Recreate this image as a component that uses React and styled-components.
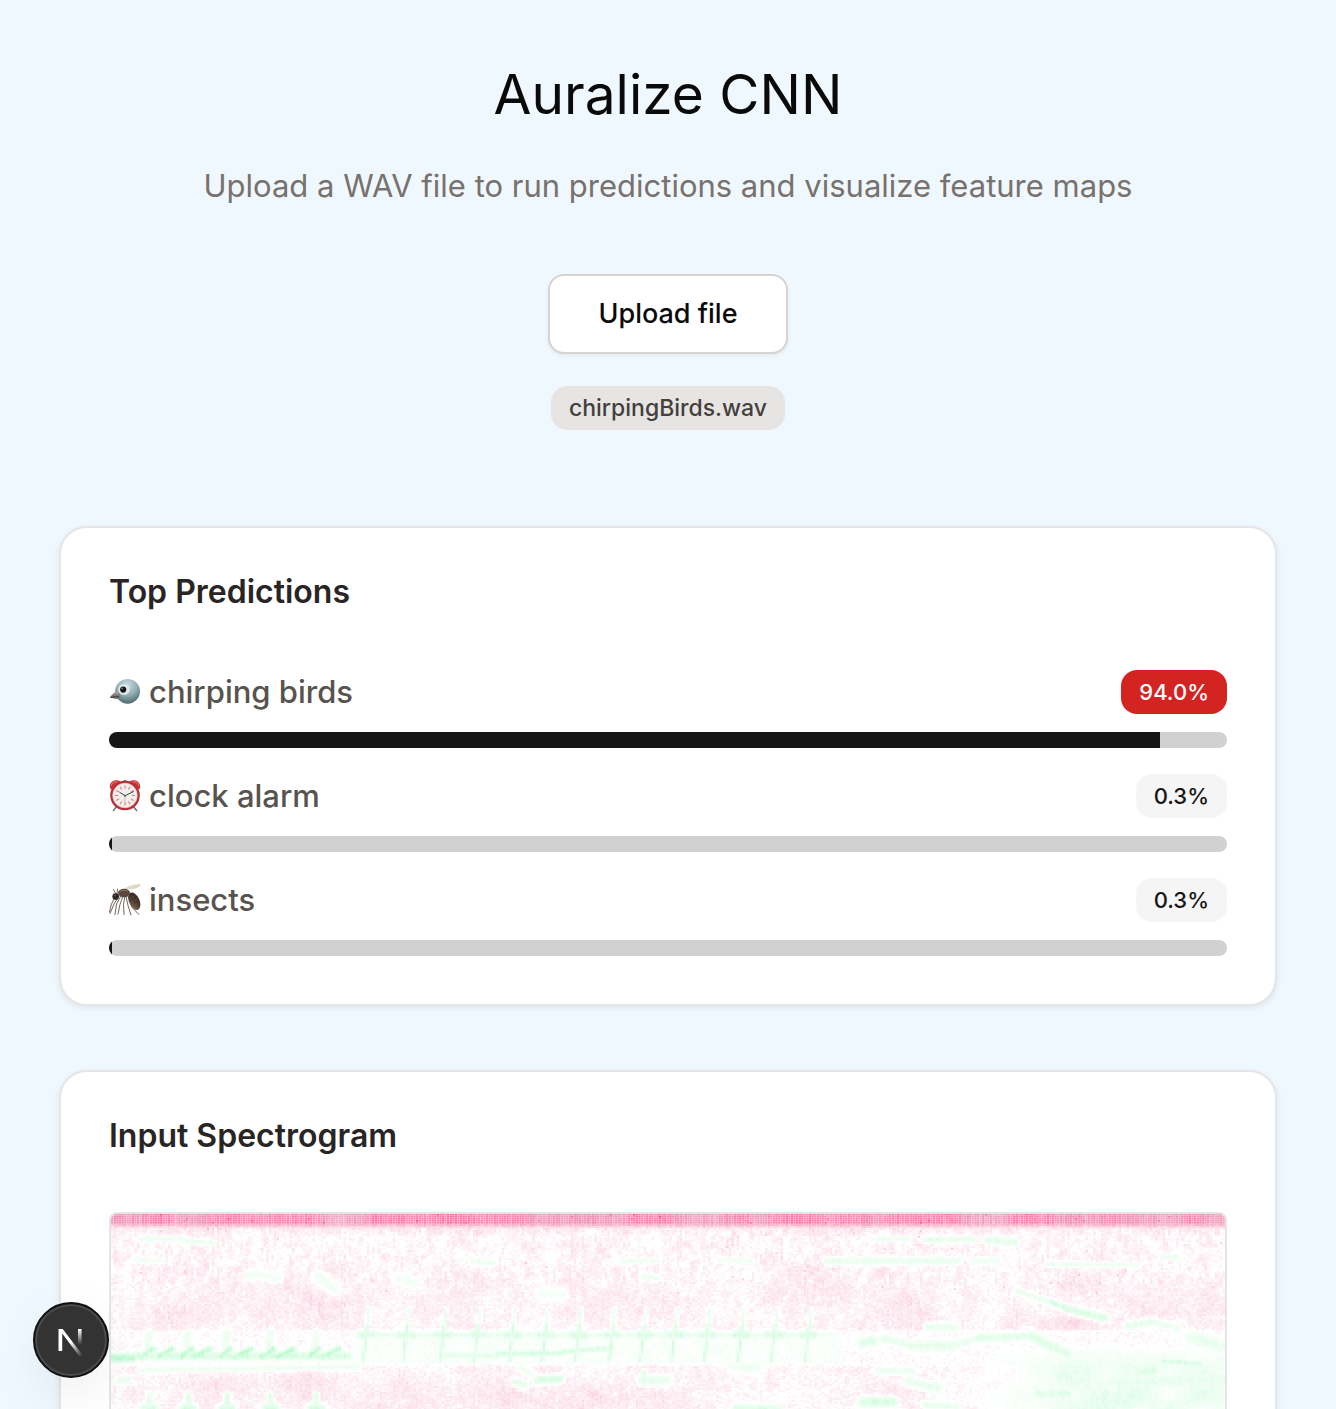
import React, { useMemo } from "react";
import styled, { createGlobalStyle } from "styled-components";

const GlobalStyle = createGlobalStyle`
  *, *::before, *::after { box-sizing: border-box; }
  body {
    margin: 0;
    background: #f0f8ff;
    font-family: Inter, "Liberation Sans", sans-serif;
    -webkit-font-smoothing: antialiased;
  }
`;

const Page = styled.main`
  height: 100vh;
  overflow-y: auto;
  scrollbar-width: none;
  padding: 64px 59px;
  background: #f0f8ff;
`;

const Header = styled.header`
  display: flex;
  flex-direction: column;
  align-items: center;
  margin-bottom: 96px;
  text-align: center;
`;

const Title = styled.h1`
  margin: 0 0 36px;
  font-size: 55px;
  line-height: 60px;
  font-weight: 400;
  color: #0a0a0a;
`;

const Subtitle = styled.p`
  margin: 0 0 62px;
  font-size: 31px;
  line-height: 52px;
  color: #78716c;
`;

const UploadButton = styled.button`
  height: 80px;
  padding: 0 48px;
  border: 2px solid #d6d3d1;
  border-radius: 16px;
  background: #fff;
  box-shadow: 0 2px 4px rgba(0, 0, 0, 0.05);
  font: 500 27px/40px Inter, "Liberation Sans", sans-serif;
  color: #0a0a0a;
  cursor: pointer;
`;

const tones = {
  file: ["#e7e5e4", "#44403c"],
  high: ["#d42422", "#ffffff"],
  low: ["#f5f5f5", "#171717"],
};

const Badge = styled.span`
  display: inline-flex;
  align-items: center;
  height: 44px;
  padding: 0 18px;
  border-radius: 16px;
  font-size: 22px;
  line-height: 32px;
  font-weight: 500;
  background: ${({ $tone }) => tones[$tone][0]};
  color: ${({ $tone }) => tones[$tone][1]};
`;

const FileBadge = styled(Badge)`
  margin-top: 32px;
  font-size: 23px;
`;

const Stack = styled.div`
  display: flex;
  flex-direction: column;
  gap: 64px;
`;

const Card = styled.section`
  padding: 48px;
  border: 2px solid #e5e5e5;
  border-radius: 28px;
  background: #fff;
  box-shadow: 0 2px 6px rgba(0, 0, 0, 0.08);
`;

const CardTitle = styled.h2`
  margin: 0 0 60px;
  font-size: 32px;
  line-height: 32px;
  font-weight: 600;
  color: #292524;
`;

const List = styled.div`
  display: flex;
  flex-direction: column;
  gap: 24px;
`;

const Row = styled.div`
  display: flex;
  flex-direction: column;
  gap: 16px;
`;

const RowHead = styled.div`
  display: flex;
  align-items: center;
  justify-content: space-between;
  height: 48px;
`;

const Label = styled.span`
  display: flex;
  align-items: center;
  gap: 8px;
  font-size: 31px;
  line-height: 48px;
  font-weight: 500;
  color: #57534e;
`;

const Glyph = styled.svg`
  flex: none;
  width: 32px;
  height: 32px;
`;

const Track = styled.div`
  height: 16px;
  border-radius: 8px;
  overflow: hidden;
  background: #d1d1d1;
`;

const Fill = styled.div`
  height: 100%;
  background: #171717;
`;

const Frame = styled.div`
  overflow: hidden;
  border: 2px solid #e5e5e5;
  border-radius: 8px;
`;

const Plot = styled.svg`
  display: block;
  width: 100%;
  height: 256px;
`;

const DevButton = styled.button`
  position: fixed;
  left: 33px;
  bottom: 31px;
  width: 76px;
  height: 76px;
  padding: 0;
  border: 2px solid #111;
  border-radius: 50%;
  background: #333;
  box-shadow: inset 0 0 0 2px #4c4c4c, 0 32px 64px -16px rgba(0, 0, 0, 0.12), 0 6px 50px rgba(0, 0, 0, 0.04);
  cursor: pointer;
`;

const DevLogo = styled.svg`
  display: block;
  width: 72px;
  height: 72px;
`;

function BirdIcon() {
  return (
    <Glyph viewBox="0 0 32 32" aria-hidden="true">
      <defs>
        <radialGradient id="birdHead" cx=".48" cy=".25" r=".75">
          <stop offset="0" stopColor="#c9dee2" />
          <stop offset=".55" stopColor="#91adb4" />
          <stop offset="1" stopColor="#4e6970" />
        </radialGradient>
        <linearGradient id="birdBeak" x1="0" y1="0" x2="0" y2="1">
          <stop offset="0" stopColor="#b5b0ac" />
          <stop offset="1" stopColor="#56504f" />
        </linearGradient>
      </defs>
      <circle cx="18.6" cy="15.3" r="12.4" fill="url(#birdHead)" />
      <path d="M1 21.4C3 18 6.3 14.7 9.2 15.2c2.4.6 2.6 4.8.8 6.6-2.3 1.8-6.2.3-9-.4Z" fill="url(#birdBeak)" />
      <path d="M1 21.4c3.2-.8 6-.9 9-.8" stroke="#45403f" strokeWidth=".8" fill="none" />
      <ellipse cx="15" cy="13.4" rx="5.8" ry="5.5" fill="#dfe9ea" />
      <circle cx="14.2" cy="13.6" r="3.1" fill="#171717" />
      <circle cx="13.2" cy="12.4" r=".8" fill="#8b8b8b" />
    </Glyph>
  );
}

function ClockIcon() {
  const ticks = Array.from({ length: 12 }, (_, i) => i * 30);
  return (
    <Glyph viewBox="0 0 32 32" aria-hidden="true">
      <path d="m8 26-3.600 4.500M24 26l3.600 4.500" stroke="#73777a" strokeWidth="1.600" strokeLinecap="round" />
      <path d="M1.200 8.500C-.6 4 3.500-.2 8.400.3c1.500.1 3 1 3.700 2L2.200 9.600ZM30.800 8.500C32.600 4 28.500-.2 23.600.3c-1.500.1-3 1-3.700 2l9.900 7.300Z" fill="#c7383d" />
      <path d="M2 5.500C3 3 5.500 1.500 8.500 1.700M30 5.500C29 3 26.500 1.500 23.500 1.700" stroke="#e77b78" strokeWidth="1" fill="none" />
      <path d="M14.500 0h3v2.500h-3Z" fill="#8f8583" />
      <circle cx="16" cy="15.500" r="13.600" fill="#f1eeeb" stroke="#b83037" strokeWidth="2.400" />
      <circle cx="16" cy="15.500" r="12.300" fill="none" stroke="#ddb1ac" strokeWidth=".5" />
      {ticks.map((a) => (
        <path key={a} d="M16 5.500v3.200" stroke="#dc6d70" strokeWidth=".9" transform={`rotate(${a} 16 15.500)`} />
      ))}
      <path d="M16 15.700 10.800 12.400M16 15.700l8.300-4" stroke="#38484a" strokeWidth="1" strokeLinecap="round" />
      <path d="M16 15v8.500" stroke="#bfa989" strokeWidth=".7" />
      <circle cx="16" cy="15.700" r="1" fill="#495557" />
    </Glyph>
  );
}

function MosquitoIcon() {
  return (
    <Glyph viewBox="0 0 32 32" aria-hidden="true">
      <defs>
        <linearGradient id="abdomen" x1="0" y1="1" x2="1" y2="0">
          <stop offset="0" stopColor="#8b735b" />
          <stop offset=".5" stopColor="#4b382e" />
          <stop offset="1" stopColor="#2b211d" />
        </linearGradient>
      </defs>
      <path d="M15 5C19 1.500 26-.3 31.800.3 31.500 3 26 5 20 4.700l-4 1.800Z" fill="#e3dbc2" />
      <path d="M20 5c4.500 0 9-1.300 11-4" stroke="#c8bea2" strokeWidth=".5" fill="none" />
      <g fill="none" stroke="#665448" strokeWidth=".9" strokeLinecap="round">
        <path d="M10 12.500 5.500 19 1 29.500" />
        <path d="m12 12-4.500 8L6 30.500" />
        <path d="m14 12-3 8.500-2 9.500" />
        <path d="m16 12-1.500 8.500.5 10" />
        <path d="m17 12 2 9.500 3 9.500" />
        <path d="m19 12 4 11.500 7 7" />
        <path d="m6 13-3.500 7L.5 28" />
        <path d="M7 10.500 4.500 5.500M8 10l.5-5" />
      </g>
      <ellipse cx="25.300" cy="17.200" rx="5.200" ry="9.300" transform="rotate(-24 25.300 17.200)" fill="url(#abdomen)" />
      <path d="m21 15 5-3.500M22 19l6-4M24.500 22.500l5-3.500" stroke="#6a5443" strokeWidth=".6" />
      <ellipse cx="15" cy="9" rx="6" ry="4.200" fill="#5a473b" />
      <path d="M10.500 8c2.500-2.500 6-2.300 8-.5" stroke="#a08a70" strokeWidth=".8" fill="none" />
      <circle cx="6.700" cy="12.600" r="3.300" fill="#2a2725" />
      <circle cx="6" cy="11.600" r=".8" fill="#77716a" />
    </Glyph>
  );
}

/* ---- spectrogram ---- */

const COLS = 431;
const ROWS = 128;
const STEP_X = 1114 / COLS;
const STEP_Y = 2;
const LEVELS = 36;

const hash = (x, y) => {
  let h = (x * 374761393 + y * 668265263) | 0;
  h = Math.imul(h ^ (h >>> 13), 1274126177);
  return ((h ^ (h >>> 16)) >>> 0) / 4294967296;
};

const smooth = (x, y) => {
  const ix = Math.floor(x);
  const iy = Math.floor(y);
  const fx = x - ix;
  const fy = y - iy;
  const sx = fx * fx * (3 - 2 * fx);
  const sy = fy * fy * (3 - 2 * fy);
  const a = hash(ix, iy) + (hash(ix + 1, iy) - hash(ix, iy)) * sx;
  const b = hash(ix, iy + 1) + (hash(ix + 1, iy + 1) - hash(ix, iy + 1)) * sx;
  return a + (b - a) * sy;
};

// Tonal traces: x1, y1, x2, y2, thickness, strength
const traces = [
  [0, 143, 20, 143, 4, 0.5], [22, 141, 235, 141, 4, 0.3],
  [28, 24, 72, 24, 3, 0.12], [75, 26, 102, 28, 3, 0.14], [22, 45, 50, 46, 3, 0.1],
  [28, 155, 245, 152, 3, 0.12], [8, 165, 16, 165, 4, 0.14],
  [137, 60, 165, 62, 6, 0.1], [207, 62, 222, 74, 7, 0.11], [286, 64, 302, 68, 6, 0.1], [360, 46, 380, 48, 4, 0.12],
  [430, 80, 448, 80, 8, 0.09], [510, 46, 545, 46, 3, 0.12], [530, 62, 546, 63, 3, 0.14], [605, 45, 640, 46, 3, 0.1],
  [246, 120, 700, 120, 3, 0.15], [700, 120, 725, 120, 3, 0.1],
  [330, 140, 385, 141, 3, 0.2], [385, 139, 450, 138, 3, 0.28], [450, 137, 500, 133, 3, 0.26],
  [425, 165, 447, 164, 4, 0.28], [403, 167, 412, 170, 4, 0.2], [530, 165, 553, 166, 5, 0.17], [532, 158, 532, 168, 3, 0.2],
  [408, 153, 418, 158, 4, 0.14], [620, 152, 645, 152, 6, 0.12], [625, 194, 665, 195, 5, 0.25],
  [765, 24, 795, 24, 3, 0.12], [812, 25, 862, 24, 3, 0.18], [875, 25, 903, 27, 4, 0.18],
  [715, 46, 845, 46, 4, 0.15], [860, 46, 885, 46, 4, 0.1], [935, 49, 1025, 50, 3, 0.12], [1050, 42, 1065, 42, 3, 0.13],
  [905, 76, 938, 87, 3, 0.15], [938, 87, 955, 94, 3, 0.3], [955, 94, 992, 103, 4, 0.27],
  [815, 112, 842, 112, 4, 0.16], [1016, 111, 1040, 107, 4, 0.2], [1040, 107, 1065, 113, 4, 0.14],
  [751, 128, 760, 126, 5, 0.25], [770, 123, 800, 131, 4, 0.18], [800, 131, 840, 131, 5, 0.18], [840, 131, 867, 123, 4, 0.17],
  [867, 123, 918, 121, 4, 0.2], [918, 121, 955, 139, 5, 0.24], [1050, 146, 1087, 149, 3, 0.28], [1030, 157, 1040, 155, 6, 0.26],
  [1080, 123, 1114, 132, 6, 0.18], [1000, 168, 1114, 165, 8, 0.17], [925, 179, 955, 179, 5, 0.22], [1000, 186, 1015, 188, 10, 0.2],
  [765, 156, 800, 156, 4, 0.13], [795, 166, 825, 173, 5, 0.16], [750, 187, 780, 187, 5, 0.27], [814, 190, 845, 192, 4, 0.16],
];

[[29, 41], [46, 60], [69, 79], [82, 98], [109, 117], [122, 139], [151, 161], [166, 181], [196, 206], [211, 226]].forEach(([a, b]) =>
  traces.push([a, 142, b, 134, 3, 0.46]),
);
[37, 76, 115, 158, 204].forEach((x) => {
  traces.push([x, 118, x - 2, 136, 4, 0.14]);
  traces.push([x, 180, x, 188, 3, 0.22]);
  traces.push([x - 4, 194, x + 4, 194, 5, 0.3]);
});
const calls = [255, 295, 332, 366, 401, 434, 467, 501, 532, 563, 596, 630, 663, 697];
calls.forEach((x) => {
  traces.push([x + 2, 94, x, 114, 2, 0.14]);
  traces.push([x, 110, x - 4, 146, 2, 0.27]);
  traces.push([x - 7, 120, x + 6, 120, 4, 0.26]);
});

const distance = (px, py, [x1, y1, x2, y2]) => {
  const dx = x2 - x1;
  const dy = y2 - y1;
  const len = dx * dx + dy * dy || 1;
  const t = Math.max(0, Math.min(1, ((px - x1) * dx + (py - y1) * dy) / len));
  return Math.hypot(px - x1 - t * dx, py - y1 - t * dy);
};

// Low-energy areas: x, y, radius x, radius y, strength
const quiet = [
  [55, 105, 28, 20, 0.09], [110, 85, 45, 28, 0.05], [195, 82, 40, 30, 0.05], [235, 98, 36, 24, 0.05],
  [95, 177, 34, 20, 0.08], [182, 175, 42, 24, 0.07], [290, 185, 55, 24, 0.06], [350, 80, 24, 26, 0.06],
  [400, 185, 70, 18, 0.05], [455, 82, 50, 24, 0.04], [545, 95, 44, 28, 0.05], [500, 187, 90, 18, 0.06],
  [700, 74, 50, 26, 0.06], [790, 100, 36, 34, 0.06], [955, 109, 34, 10, 0.15], [970, 70, 50, 22, 0.05],
  [1040, 92, 40, 26, 0.05], [1100, 95, 26, 24, 0.07], [780, 175, 34, 12, 0.08], [1075, 185, 50, 14, 0.05],
];

const loudness = (c, r) => {
  const x = c * STEP_X;
  const y = r * STEP_Y;
  const n = hash(c, r);
  if (r < 5) {
    const wave = smooth(x / 24, 3);
    return -(0.46 + 0.16 * wave + 0.12 * (hash(c, 900) - 0.5) + 0.08 * (n - 0.5) + (n > 0.985 ? 0.16 : 0));
  }
  if (r < 7) return -(0.27 - (r - 5) * 0.14 + 0.08 * hash(c, 900) + 0.06 * n);

  let green = 0;
  for (const t of traces) {
    const reach = t[4] * 2.4;
    if (x < Math.min(t[0], t[2]) - reach || x > Math.max(t[0], t[2]) + reach) continue;
    const d = distance(x, y, t);
    if (d > reach) continue;
    green = Math.max(green, t[5] * Math.exp(-(d * d) / (t[4] * t[4])));
  }
  if (x > 850 && y > 128) {
    const edge = Math.min(1, (x - 850) / 120) * Math.min(1, (y - 128) / 24);
    green = Math.max(green, edge * (0.03 + 0.17 * smooth(x / 32, y / 18)));
  }
  if (y < 150 && y > 122 && x > 240 && x < 730) green = Math.max(green, 0.03 + 0.03 * smooth(x / 12, y / 8));

  let pink = 0;
  for (const q of quiet) {
    const dx = (x - q[0]) / q[2];
    const dy = (y - q[1]) / q[3];
    const d = dx * dx + dy * dy;
    if (d < 5) pink += q[4] * Math.exp(-d);
  }
  const mass = smooth(x / 22 + 9, y / 14 + 4);
  pink += 0.018 + 0.07 * mass * mass;
  if (y > 114 && y < 152) pink *= 0.2;
  const streak = smooth(c * 0.9, r / 3 + 30) - 0.5;
  const grain = n - 0.5;
  pink += streak * (y < 70 ? 0.15 : 0.08) + grain * 0.09;
  if (y < 22) pink += 0.06 * (1 - (y - 14) / 8);
  if (n > 0.996 && y < 80) pink += 0.12;
  const shade = 1 - Math.min(1, green * 9);
  const lift = green * (0.7 + 0.45 * hash(c, r >> 2)) + (green > 0.02 ? grain * 0.05 : 0);
  return lift - Math.max(0, pink) * shade;
};

const mix = (t, [r, g, b]) =>
  `rgb(${Math.round(255 + (r - 255) * t)},${Math.round(255 + (g - 255) * t)},${Math.round(255 + (b - 255) * t)})`;

function Spectrogram() {
  const layers = useMemo(() => {
    const buckets = new Map();
    for (let r = 0; r < ROWS; r += 1) {
      for (let c = 0; c < COLS; c += 1) {
        const v = Math.max(-1, Math.min(1, loudness(c, r)));
        const key = Math.round(v * LEVELS);
        if (key === 0) continue;
        if (!buckets.has(key)) buckets.set(key, []);
        const side = r < 5 ? 0.93 : 1;
        buckets.get(key).push(`M${c} ${r}h${side}v${side}h-${side}z`);
      }
    }
    return [...buckets.entries()].map(([key, cells]) => ({
      key,
      fill: key < 0 ? mix(-key / LEVELS, [230, 50, 115]) : mix(key / LEVELS, [110, 245, 150]),
      d: cells.join(""),
    }));
  }, []);
  return (
    <Plot viewBox={`0 0 ${COLS} ${ROWS}`} preserveAspectRatio="none" role="img" aria-label="Input spectrogram">
      {layers.map(({ key, fill, d }) => (
        <path key={key} d={d} fill={fill} />
      ))}
    </Plot>
  );
}

const predictions = [
  { name: "chirping birds", value: 94, Icon: BirdIcon, tone: "high" },
  { name: "clock alarm", value: 0.3, Icon: ClockIcon, tone: "low" },
  { name: "insects", value: 0.3, Icon: MosquitoIcon, tone: "low" },
];

export default function App() {
  return (
    <>
      <GlobalStyle />
      <Page>
        <Header>
          <Title>Auralize CNN</Title>
          <Subtitle>Upload a WAV file to run predictions and visualize feature maps</Subtitle>
          <UploadButton type="button">Upload file</UploadButton>
          <FileBadge $tone="file">chirpingBirds.wav</FileBadge>
        </Header>
        <Stack>
          <Card>
            <CardTitle>Top Predictions</CardTitle>
            <List>
              {predictions.map(({ name, value, Icon, tone }) => (
                <Row key={name}>
                  <RowHead>
                    <Label>
                      <Icon />
                      {name}
                    </Label>
                    <Badge $tone={tone}>{value.toFixed(1)}%</Badge>
                  </RowHead>
                  <Track role="progressbar" aria-label={name} aria-valuenow={value} aria-valuemin={0} aria-valuemax={100}>
                    <Fill style={{ width: `${value}%` }} />
                  </Track>
                </Row>
              ))}
            </List>
          </Card>
          <Card>
            <CardTitle>Input Spectrogram</CardTitle>
            <Frame>
              <Spectrogram />
            </Frame>
          </Card>
        </Stack>
      </Page>
      <DevButton type="button" aria-label="Open developer tools">
        <DevLogo viewBox="0 0 72 72" fill="none" aria-hidden="true">
          <defs>
            <linearGradient id="stem" x1="0" y1="25" x2="0" y2="41" gradientUnits="userSpaceOnUse">
              <stop offset="0" stopColor="#fff" />
              <stop offset="1" stopColor="#fff" stopOpacity="0" />
            </linearGradient>
            <linearGradient id="diagonal" x1="36" y1="38" x2="47" y2="52" gradientUnits="userSpaceOnUse">
              <stop offset="0" stopColor="#fff" />
              <stop offset="1" stopColor="#fff" stopOpacity="0" />
            </linearGradient>
          </defs>
          <path d="M43 25h3.600v17H43Z" fill="url(#stem)" />
          <path d="M23.500 25h4.200l20 26.300-2.700 2L27.200 29.600V47h-3.700Z" fill="url(#diagonal)" />
        </DevLogo>
      </DevButton>
    </>
  );
}
